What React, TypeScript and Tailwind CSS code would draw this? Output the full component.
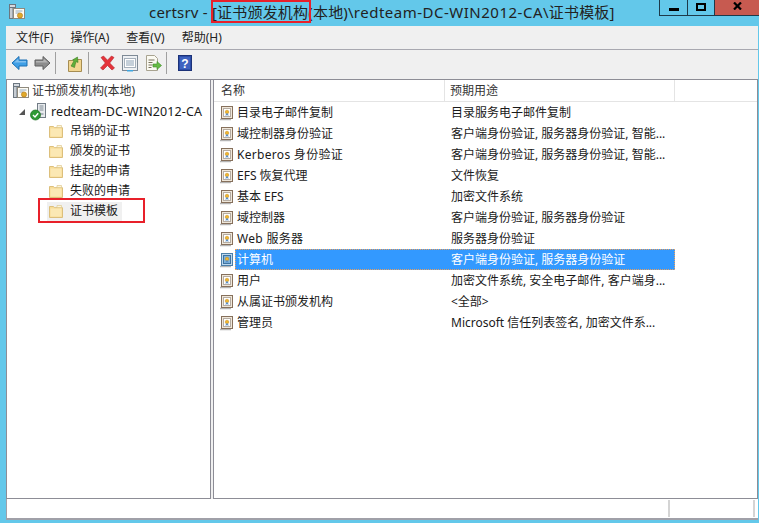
const font = "font-['Noto_Sans','Noto_Sans_CJK_SC',sans-serif]";

const CertIcon = ({ blue = false }: { blue?: boolean }) => (
  <svg width="16" height="16" viewBox="0 0 16 16" className="shrink-0">
    <path d="M1 14.500h11" stroke="#b5b5b5" strokeWidth="1.500" />
    <rect x="2.500" y="1.500" width="11" height="12" fill={blue ? "#bcd8ee" : "#efe7da"} stroke={blue ? "#4c7fa8" : "#86705c"} />
    <rect x="4.500" y="3.500" width="7" height="8" fill={blue ? "#7fb4dd" : "#fff"} stroke={blue ? "#3f73a0" : "#b5aca2"} />
    <circle cx="8" cy="7" r="1.800" fill="#efb52e" stroke="#c48a18" strokeWidth="0.500" />
    <path d="M7 8.500l-.5 2.500 1.500-1 1.500 1-.5-2.500z" fill="#5b8fc7" />
  </svg>
);

const FolderIcon = () => (
  <svg width="16" height="16" viewBox="0 0 16 16" className="shrink-0">
    <path d="M1.500 3.500h4l1 1.200h8v9.800h-13z" fill="#f8dd96" stroke="#dcbf7c" />
    <path d="M9 2.500h4.500v2H9z" fill="#fdf6dc" stroke="#dfc98f" strokeWidth="0.700" />
    <rect x="2.500" y="5.500" width="11" height="8" fill="#fbe8b4" />
  </svg>
);

const CaRootIcon = () => (
  <svg width="18" height="18" viewBox="0 0 18 18" className="shrink-0">
    <rect x="1.500" y="1.500" width="6" height="3" fill="#d6dbe0" stroke="#6b7680" />
    <rect x="1.500" y="4.500" width="3.500" height="11" fill="#c7cdd3" stroke="#6b7680" />
    <rect x="5.500" y="5.500" width="11" height="10" fill="#fffdf5" stroke="#8f8a7e" />
    <path d="M7.500 8h7M7.500 10h4" stroke="#90a8bf" />
    <circle cx="12" cy="12.500" r="2.600" fill="#e0a92a" stroke="#b0761a" strokeWidth="0.600" />
  </svg>
);

const ServerIcon = () => (
  <svg width="20" height="18" viewBox="0 0 20 18" className="shrink-0">
    <rect x="7.500" y="0.500" width="8" height="14" fill="#e8ebee" stroke="#727c86" />
    <path d="M9.500 3h4M9.500 5h4M9.500 7h4" stroke="#7f8a94" />
    <rect x="9.500" y="10" width="4" height="2" fill="#a9b2ba" />
    <circle cx="5.500" cy="12" r="5" fill="#2f9a34" stroke="#1d6e23" strokeWidth="0.700" />
    <path d="M3 12l2 2 3.200-3.800" stroke="#fff" strokeWidth="1.400" fill="none" />
  </svg>
);

const ArrowIcon = ({ left, color, edge }: { left: boolean; color: string; edge: string }) => (
  <svg width="17" height="16" viewBox="0 0 17 16" className={left ? "shrink-0" : "shrink-0 -scale-x-100"}>
    <path d="M1 8l7-6.500V5h8v6H8v3.500z" fill={color} stroke={edge} strokeLinejoin="round" />
    <path d="M3 7.500l4.500-4V6H15v1.500z" fill="#ffffff" opacity="0.350" />
  </svg>
);

const UpFolderIcon = () => (
  <svg width="16" height="19" viewBox="0 0 16 19" className="shrink-0">
    <path d="M1.500 6.500h4l1-1h8v12h-13z" fill="#f2d691" stroke="#a68d52" />
    <path d="M4 12c1-1 1.500-3 3-5L5.500 6l5-3 .5 5.500-1.700-1c-1 2-1.300 4-1.800 6z" fill="#5fae3a" stroke="#3b7f22" strokeWidth="0.600" />
  </svg>
);

const DeleteIcon = () => (
  <svg width="17" height="16" viewBox="0 0 17 16" className="shrink-0">
    <path d="M2 2.500l2.500-1.500 4 4.200 4-4.200L15 2.500 10.700 8 15.500 13l-2.500 2-4.500-4.500L4 15l-2.500-2 4.800-5z" fill="#e5333a" stroke="#b3232a" strokeWidth="0.600" />
  </svg>
);

const PropsIcon = () => (
  <svg width="16" height="17" viewBox="0 0 16 17" className="shrink-0">
    <rect x="0.500" y="0.500" width="15" height="15" fill="#eef1f4" stroke="#7e8a96" />
    <rect x="2.500" y="3.500" width="11" height="9" fill="#fff" stroke="#a5b0bb" />
    <path d="M4 6h8M4 8h8M4 10h8" stroke="#8aa0b4" />
    <path d="M5 15h6v1.500H5z" fill="#3fa7e0" />
  </svg>
);

const ExportIcon = () => (
  <svg width="17" height="16" viewBox="0 0 17 16" className="shrink-0">
    <path d="M1.500 0.500h8l3 3v12h-11z" fill="#fbfaf2" stroke="#a8a390" />
    <path d="M3.500 5h6M3.500 7.500h4M3.500 10h4M3.500 12.500h3" stroke="#77705c" />
    <path d="M8 9h4V6.500L16.500 10.500 12 14.500V12H8z" fill="#66bb44" stroke="#3e8b28" strokeWidth="0.600" />
  </svg>
);

const HelpIcon = () => (
  <svg width="14" height="16" viewBox="0 0 14 16" className="shrink-0">
    <rect x="0.500" y="0.500" width="13" height="15" fill="#2d4ea8" stroke="#1c3278" />
    <rect x="2" y="2" width="10" height="12" fill="#3f63c0" />
    <text x="7" y="12.500" fontSize="12" fontWeight="700" textAnchor="middle" fill="#ffffff" fontFamily="Liberation Sans, sans-serif">?</text>
  </svg>
);

const Sep = () => <div className="w-px h-[22px] bg-[#a0a0a0] shrink-0" />;

const tree = ["吊销的证书", "颁发的证书", "挂起的申请", "失败的申请"];

const rows: [string, string][] = [
  ["目录电子邮件复制", "目录服务电子邮件复制"],
  ["域控制器身份验证", "客户端身份验证, 服务器身份验证, 智能..."],
  ["Kerberos 身份验证", "客户端身份验证, 服务器身份验证, 智能..."],
  ["EFS 恢复代理", "文件恢复"],
  ["基本 EFS", "加密文件系统"],
  ["域控制器", "客户端身份验证, 服务器身份验证"],
  ["Web 服务器", "服务器身份验证"],
  ["计算机", "客户端身份验证, 服务器身份验证"],
  ["用户", "加密文件系统, 安全电子邮件, 客户端身..."],
  ["从属证书颁发机构", "<全部>"],
  ["管理员", "Microsoft 信任列表签名, 加密文件系..."],
];

export default function App() {
  return (
    <div className={`${font} w-[759px] h-[523px] bg-[#63c8ea] flex flex-col overflow-hidden text-[12px] text-[#1a1a1a] leading-none`}>
      {/* title bar */}
      <div className="h-[26px] flex items-start shrink-0 relative">
        <div className="pl-[8px] pt-[3px]"><CaRootIcon /></div>
        <div className="absolute left-[149px] top-[3px] text-[15px] tracking-[0.2px] leading-[18px] text-[#222] whitespace-nowrap">
          certsrv - [证书颁发机构(本地)\<span className="tracking-[0.5px]">redteam-DC-WIN2012-CA</span>\证书模板]
        </div>
        <div className="absolute left-[211px] top-0 w-[100px] h-[23px] border-2 border-[#e8202a]" />
        <div className="ml-auto flex h-[16px]">
          <div className="w-[29px] border border-t-0 border-[#1d3a4a] flex items-center justify-center">
            <div className="w-[10px] h-[3px] bg-black mt-[3px]" />
          </div>
          <div className="w-[26px] border-b border-[#1d3a4a] flex items-center justify-center">
            <div className="w-[10px] h-[8px] border-2 border-black -mt-[2px]" />
          </div>
          <div className="w-[45px] bg-[#c75a50] border-l border-b border-[#1d3a4a] flex items-start justify-center">
            <svg width="9" height="8" viewBox="0 0 9 8" className="mt-[2px]">
              <path d="M1 0.500l7 7M8 0.500l-7 7" stroke="#000" strokeWidth="2.200" />
            </svg>
          </div>
        </div>
      </div>

      {/* window body */}
      <div className="ml-[6px] mr-[1px] bg-[#f0f0f0] flex flex-col">
        <div className="h-[23px] flex items-center gap-[17px] pl-[10px] text-[#222] border-b border-[#a8a8b0] shrink-0 box-content">
          <span>文件(F)</span>
          <span>操作(A)</span>
          <span>查看(V)</span>
          <span>帮助(H)</span>
        </div>
        <div className="h-[29px] flex items-center pl-[5px] pb-[3px] shrink-0">
          <ArrowIcon left color="#3f9fe6" edge="#1c6fb2" />
          <div className="ml-[6px]"><ArrowIcon left={false} color="#8d8d8d" edge="#5e5e5e" /></div>
          <div className="ml-[4px]"><Sep /></div>
          <div className="ml-[11px]"><UpFolderIcon /></div>
          <div className="ml-[5px]"><Sep /></div>
          <div className="ml-[10px]"><DeleteIcon /></div>
          <div className="ml-[6px]"><PropsIcon /></div>
          <div className="ml-[7px]"><ExportIcon /></div>
          <div className="ml-[4px]"><Sep /></div>
          <div className="ml-[11px]"><HelpIcon /></div>
        </div>

        <div className="h-[420px] flex gap-[2px] shrink-0 border-t border-[#8d8d96]">
          {/* tree */}
          <div className="w-[205px] bg-white border-r border-l border-b border-[#8d8d96] pt-[1px] pl-[5px] shrink-0">
            <div className="h-[20px] flex items-center gap-[2px] text-[#333]">
              <CaRootIcon />
              <span>证书颁发机构(本地)</span>
            </div>
            <div className="h-[20px] flex items-center mt-[1px] -mb-[1px]">
              <svg width="8" height="8" viewBox="0 0 8 8" className="ml-[6px] shrink-0">
                <path d="M7 1v6H1z" fill="#555" />
              </svg>
              <div className="ml-[4px]"><ServerIcon /></div>
              <span className="ml-[1px] text-[12.500px] tracking-[0.1px]">redteam-DC-WIN2012-CA</span>
            </div>
            {tree.map((t) => (
              <div key={t} className="h-[20px] flex items-center pl-[36px] gap-[6px]">
                <FolderIcon />
                <span>{t}</span>
              </div>
            ))}
            <div className="h-[20px] flex items-center pl-[35px] relative">
              <div className="flex items-center gap-[6px] bg-[#f0f0f0] h-[19px] pr-[4px] pl-[1px]">
                <FolderIcon />
                <span>证书模板</span>
              </div>
              <div className="absolute left-[26px] -top-[3px] w-[107px] h-[25px] border-2 border-[#e8202a]" />
            </div>
          </div>

          {/* list */}
          <div className="flex-1 bg-white border border-t-0 border-[#8d8d96]">
            <div className="h-[22px] flex border-b border-[#e4e4e4] items-stretch">
              <div className="w-[231px] border-r border-[#e4e4e4] flex items-center pl-[7px] text-[#333]">名称</div>
              <div className="w-[230px] border-r border-[#e4e4e4] flex items-center pl-[5px] text-[#333]">预期用途</div>
            </div>
            <div>
              {rows.map(([name, use]) => {
                const sel = name === "计算机";
                const latin = name === "Kerberos 身份验证" || name === "Web 服务器";
                return (
                  <div key={name} className="h-[21px] flex items-center relative">
                    <div className="w-[231px] flex items-center pl-[5px] h-full">
                      <CertIcon blue={sel} />
                      <span className={`pl-[2px] ${sel ? "bg-[#3399ff] text-white h-full flex-1 flex items-center" : ""} ${latin ? "tracking-[0.3px]" : ""}`}>{name}</span>
                    </div>
                    <div className={`w-[230px] h-full flex items-center pl-[6px] whitespace-nowrap overflow-hidden ${sel ? "bg-[#3399ff] text-white" : ""}`}>
                      {use}
                    </div>
                    {sel && <div className="absolute left-[21px] top-0 w-[440px] h-full border border-dotted border-[#e8a060]" />}
                  </div>
                );
              })}
            </div>
          </div>
        </div>

        {/* status bar */}
        <div className="h-[21px] bg-white border-b-2 border-l border-[#a0a0a8] flex shrink-0 py-[1px]">
          <div className="w-[663px] border-r-2 border-[#d4d4d4]" />
          <div className="w-[85px] border-r-2 border-[#d4d4d4]" />
        </div>
      </div>
    </div>
  );
}
